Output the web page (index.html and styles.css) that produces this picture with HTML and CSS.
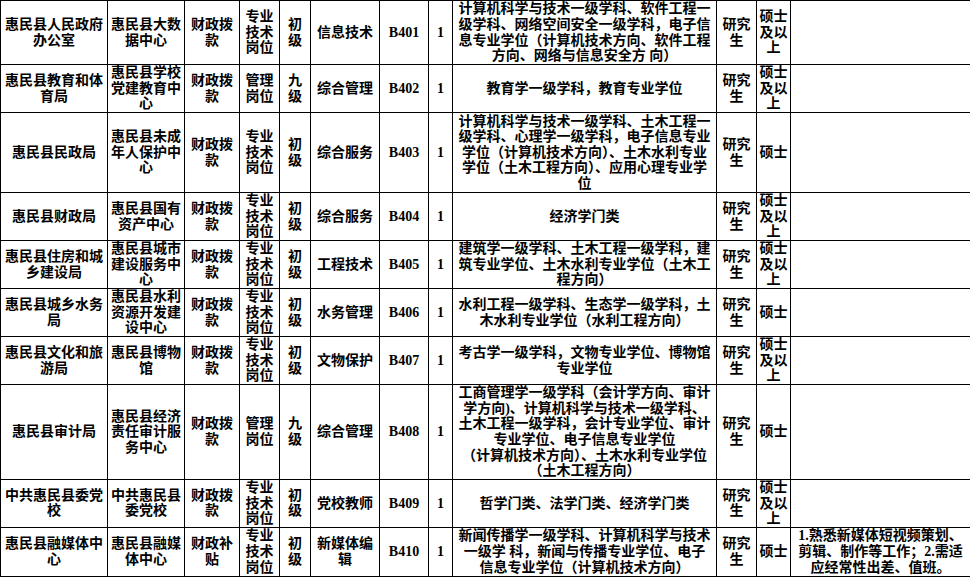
FILE: index.html
```html
<!DOCTYPE html>
<html lang="zh-CN">
<head>
<meta charset="utf-8">
<title>岗位表</title>
<link rel="stylesheet" href="styles.css">
</head>
<body>
<table class="posts">
  <colgroup>
    <col class="c-dept"><col class="c-unit"><col class="c-fund"><col class="c-type"><col class="c-level"><col class="c-name"><col class="c-code"><col class="c-num"><col class="c-major"><col class="c-edu"><col class="c-deg"><col class="c-note">
  </colgroup>
  <tbody>
    <tr class="h64">
      <td>惠民县人民政府<br>办公室</td>
      <td>惠民县大数<br>据中心</td>
      <td>财政拨<br>款</td>
      <td>专业<br>技术<br>岗位</td>
      <td>初<br>级</td>
      <td>信息技术</td>
      <td class="latin">B401</td>
      <td class="latin">1</td>
      <td>计算机科学与技术一级学科、软件工程一<br>级学科、网络空间安全一级学科，电子信<br>息专业学位（计算机技术方向、软件工程<br>方向、网络与信息安全方 向）</td>
      <td>研究<br>生</td>
      <td>硕士<br>及以<br>上</td>
      <td></td>
    </tr>
    <tr class="h48">
      <td>惠民县教育和体<br>育局</td>
      <td>惠民县学校<br>党建教育中<br>心</td>
      <td>财政拨<br>款</td>
      <td>管理<br>岗位</td>
      <td>九<br>级</td>
      <td>综合管理</td>
      <td class="latin">B402</td>
      <td class="latin">1</td>
      <td>教育学一级学科，教育专业学位</td>
      <td>研究<br>生</td>
      <td>硕士<br>及以<br>上</td>
      <td></td>
    </tr>
    <tr class="h80">
      <td>惠民县民政局</td>
      <td>惠民县未成<br>年人保护中<br>心</td>
      <td>财政拨<br>款</td>
      <td>专业<br>技术<br>岗位</td>
      <td>初<br>级</td>
      <td>综合服务</td>
      <td class="latin">B403</td>
      <td class="latin">1</td>
      <td>计算机科学与技术一级学科、土木工程一<br>级学科、心理学一级学科，电子信息专业<br>学位（计算机技术方向）、土木水利专业<br>学位（土木工程方向）、应用心理专业学<br>位</td>
      <td>研究<br>生</td>
      <td>硕士</td>
      <td></td>
    </tr>
    <tr class="h48">
      <td>惠民县财政局</td>
      <td>惠民县国有<br>资产中心</td>
      <td>财政拨<br>款</td>
      <td>专业<br>技术<br>岗位</td>
      <td>初<br>级</td>
      <td>综合服务</td>
      <td class="latin">B404</td>
      <td class="latin">1</td>
      <td>经济学门类</td>
      <td>研究<br>生</td>
      <td>硕士<br>及以<br>上</td>
      <td></td>
    </tr>
    <tr class="h48">
      <td>惠民县住房和城<br>乡建设局</td>
      <td>惠民县城市<br>建设服务中<br>心</td>
      <td>财政拨<br>款</td>
      <td>专业<br>技术<br>岗位</td>
      <td>初<br>级</td>
      <td>工程技术</td>
      <td class="latin">B405</td>
      <td class="latin">1</td>
      <td>建筑学一级学科、土木工程一级学科，建<br>筑专业学位、土木水利专业学位（土木工<br>程方向）</td>
      <td>研究<br>生</td>
      <td>硕士<br>及以<br>上</td>
      <td></td>
    </tr>
    <tr class="h48">
      <td>惠民县城乡水务<br>局</td>
      <td>惠民县水利<br>资源开发建<br>设中心</td>
      <td>财政拨<br>款</td>
      <td>专业<br>技术<br>岗位</td>
      <td>初<br>级</td>
      <td>水务管理</td>
      <td class="latin">B406</td>
      <td class="latin">1</td>
      <td>水利工程一级学科、生态学一级学科，土<br>木水利专业学位（水利工程方向）</td>
      <td>研究<br>生</td>
      <td>硕士</td>
      <td></td>
    </tr>
    <tr class="h48">
      <td>惠民县文化和旅<br>游局</td>
      <td>惠民县博物<br>馆</td>
      <td>财政拨<br>款</td>
      <td>专业<br>技术<br>岗位</td>
      <td>初<br>级</td>
      <td>文物保护</td>
      <td class="latin">B407</td>
      <td class="latin">1</td>
      <td>考古学一级学科，文物专业学位、博物馆<br>专业学位</td>
      <td>研究<br>生</td>
      <td>硕士<br>及以<br>上</td>
      <td></td>
    </tr>
    <tr class="h96">
      <td>惠民县审计局</td>
      <td>惠民县经济<br>责任审计服<br>务中心</td>
      <td>财政拨<br>款</td>
      <td>管理<br>岗位</td>
      <td>九<br>级</td>
      <td>综合管理</td>
      <td class="latin">B408</td>
      <td class="latin">1</td>
      <td>工商管理学一级学科（会计学方向、审计<br>学方向)、计算机科学与技术一级学科、<br>土木工程一级学科，会计专业学位、审计<br>专业学位、电子信息专业学位<br>（计算机技术方向）、土木水利专业学位<br>（土木工程方向）</td>
      <td>研究<br>生</td>
      <td>硕士</td>
      <td></td>
    </tr>
    <tr class="h47">
      <td>中共惠民县委党<br>校</td>
      <td>中共惠民县<br>委党校</td>
      <td>财政拨<br>款</td>
      <td>专业<br>技术<br>岗位</td>
      <td>初<br>级</td>
      <td>党校教师</td>
      <td class="latin">B409</td>
      <td class="latin">1</td>
      <td>哲学门类、法学门类、经济学门类</td>
      <td>研究<br>生</td>
      <td>硕士<br>及以<br>上</td>
      <td></td>
    </tr>
    <tr class="h49">
      <td>惠民县融媒体中<br>心</td>
      <td>惠民县融媒<br>体中心</td>
      <td>财政补<br>贴</td>
      <td>专业<br>技术<br>岗位</td>
      <td>初<br>级</td>
      <td>新媒体编<br>辑</td>
      <td class="latin">B410</td>
      <td class="latin">1</td>
      <td>新闻传播学一级学科、计算机科学与技术<br>一级学 科，新闻与传播专业学位、电子<br>信息专业学位（计算机技术方向）</td>
      <td>研究<br>生</td>
      <td>硕士</td>
      <td>1.熟悉新媒体短视频策划、<br>剪辑、制作等工作；2.需适<br>应经常性出差、值班。</td>
    </tr>
  </tbody>
</table>
</body>
</html>
```

FILE: styles.css
```css
html, body {
  margin: 0;
  padding: 0;
  background: #ffffff;
}

.posts {
  border-collapse: collapse;
  table-layout: fixed;
  width: 970px;
  font-family: "Liberation Serif", "Noto Sans CJK SC", serif;
  font-size: 14px;
  font-weight: 700;
  color: #000000;
}

.posts td {
  border: 1px solid #000000;
  padding: 0;
  text-align: center;
  vertical-align: middle;
  line-height: 15.6px;
  white-space: nowrap;
  overflow: hidden;
}

.posts .latin {
  font-size: 14px;
}

.c-dept { width: 107px; }
.c-unit { width: 77px; }
.c-fund { width: 55px; }
.c-type { width: 40px; }
.c-level { width: 31px; }
.c-name { width: 69px; }
.c-code { width: 49px; }
.c-num { width: 24px; }
.c-major { width: 264px; }
.c-edu { width: 40px; }
.c-deg { width: 34px; }
.c-note { width: 180px; }

.h64 { height: 64px; }
.h48 { height: 48px; }
.h80 { height: 80px; }
.h96 { height: 95px; }
.h47 { height: 47px; }
.h49 { height: 49px; }
```
